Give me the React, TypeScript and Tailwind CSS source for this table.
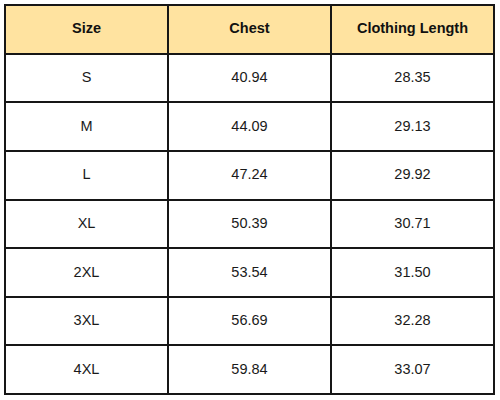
import React from 'react';

const rows = [
  ['S', '40.94', '28.35'],
  ['M', '44.09', '29.13'],
  ['L', '47.24', '29.92'],
  ['XL', '50.39', '30.71'],
  ['2XL', '53.54', '31.50'],
  ['3XL', '56.69', '32.28'],
  ['4XL', '59.84', '33.07'],
];

const headers = ['Size', 'Chest', 'Clothing Length'];

export default function App() {
  return (
    <div className="w-[500px] h-[400px] bg-white pt-[4px] pl-[4px]" style={{ fontFamily: '"Liberation Sans", Arial, sans-serif' }}>
      <div className="w-[491px] h-[391px] bg-[#161616] p-[2px] grid grid-cols-3 grid-rows-8 gap-[2px]">
        {headers.map((h) => (
          <div key={h} className="bg-[#ffe3a0] flex items-center justify-center text-[14.5px] font-bold text-[#111]">
            {h}
          </div>
        ))}
        {rows.map((r) =>
          r.map((cell, i) => (
            <div key={r[0] + i} className="bg-white flex items-center justify-center text-[14.5px] text-[#1a1a1a]">
              {cell}
            </div>
          ))
        )}
      </div>
    </div>
  );
}
